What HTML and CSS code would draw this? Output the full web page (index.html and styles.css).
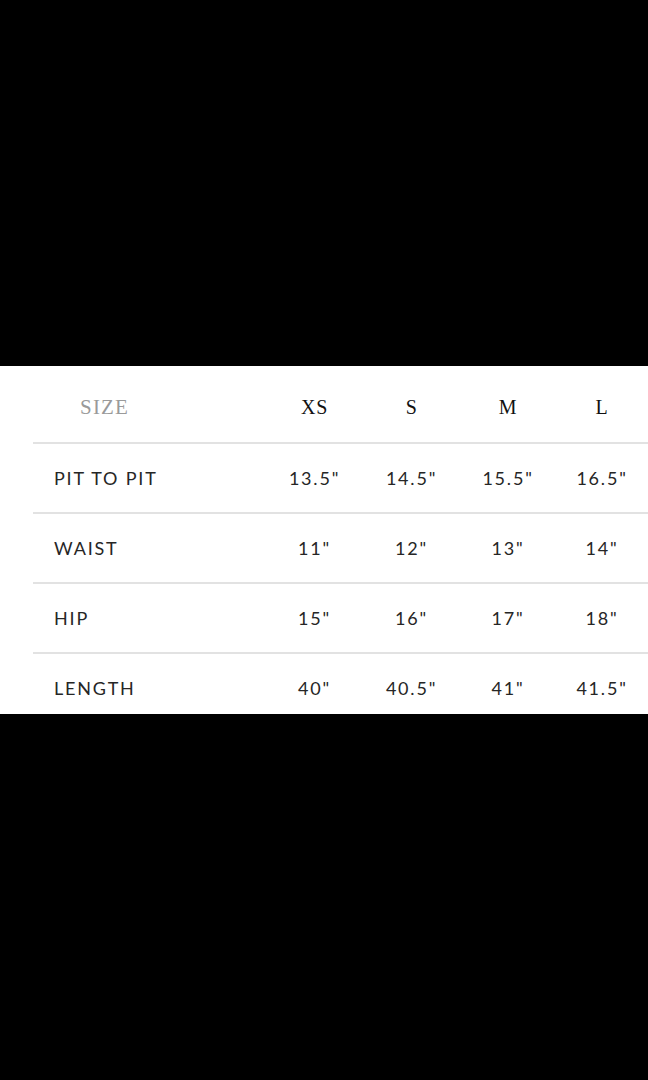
FILE: index.html
```html
<!DOCTYPE html>
<html>
<head>
<meta charset="utf-8">
<link rel="stylesheet" href="styles.css">
</head>
<body>
<main class="screen">
  <section class="panel">
    <div class="table">
      <div class="row head">
        <div class="label size">SIZE</div>
        <div class="cell">XS</div>
        <div class="cell">S</div>
        <div class="cell">M</div>
        <div class="cell">L</div>
      </div>
      <div class="row">
        <div class="label">PIT TO PIT</div>
        <div class="cell">13.5"</div>
        <div class="cell">14.5"</div>
        <div class="cell">15.5"</div>
        <div class="cell">16.5"</div>
      </div>
      <div class="row">
        <div class="label">WAIST</div>
        <div class="cell">11"</div>
        <div class="cell">12"</div>
        <div class="cell">13"</div>
        <div class="cell">14"</div>
      </div>
      <div class="row">
        <div class="label">HIP</div>
        <div class="cell">15"</div>
        <div class="cell">16"</div>
        <div class="cell">17"</div>
        <div class="cell">18"</div>
      </div>
      <div class="row">
        <div class="label">LENGTH</div>
        <div class="cell">40"</div>
        <div class="cell">40.5"</div>
        <div class="cell">41"</div>
        <div class="cell">41.5"</div>
      </div>
    </div>
  </section>
</main>
</body>
</html>
```

FILE: styles.css
```css
html, body {
  margin: 0;
  padding: 0;
  background: #000;
}

.screen {
  width: 648px;
  height: 1080px;
  padding-top: 366px;
  box-sizing: border-box;
}

.panel {
  background: #fff;
  height: 348px;
  overflow: hidden;
  padding-left: 33px;
}

.row {
  display: grid;
  grid-template-columns: 233px 97px 97px 96px 92px;
  align-items: center;
  height: 68px;
  border-top: 2px solid #e2e2e2;
  font-family: Lato, "Open Sans", sans-serif;
  font-size: 18px;
  letter-spacing: 1.8px;
  color: #262626;
}

.row.head {
  border-top: none;
  height: 70px;
  padding-top: 6px;
  font-family: "Liberation Serif", "DejaVu Serif", serif;
  font-size: 20px;
  letter-spacing: 0.6px;
  color: #111;
}

.label {
  padding-left: 21px;
}

.label.size {
  padding-left: 47px;
  color: #9a9a9a;
  font-size: 21px;
  letter-spacing: 1.2px;
}

.cell {
  text-align: center;
}
```
